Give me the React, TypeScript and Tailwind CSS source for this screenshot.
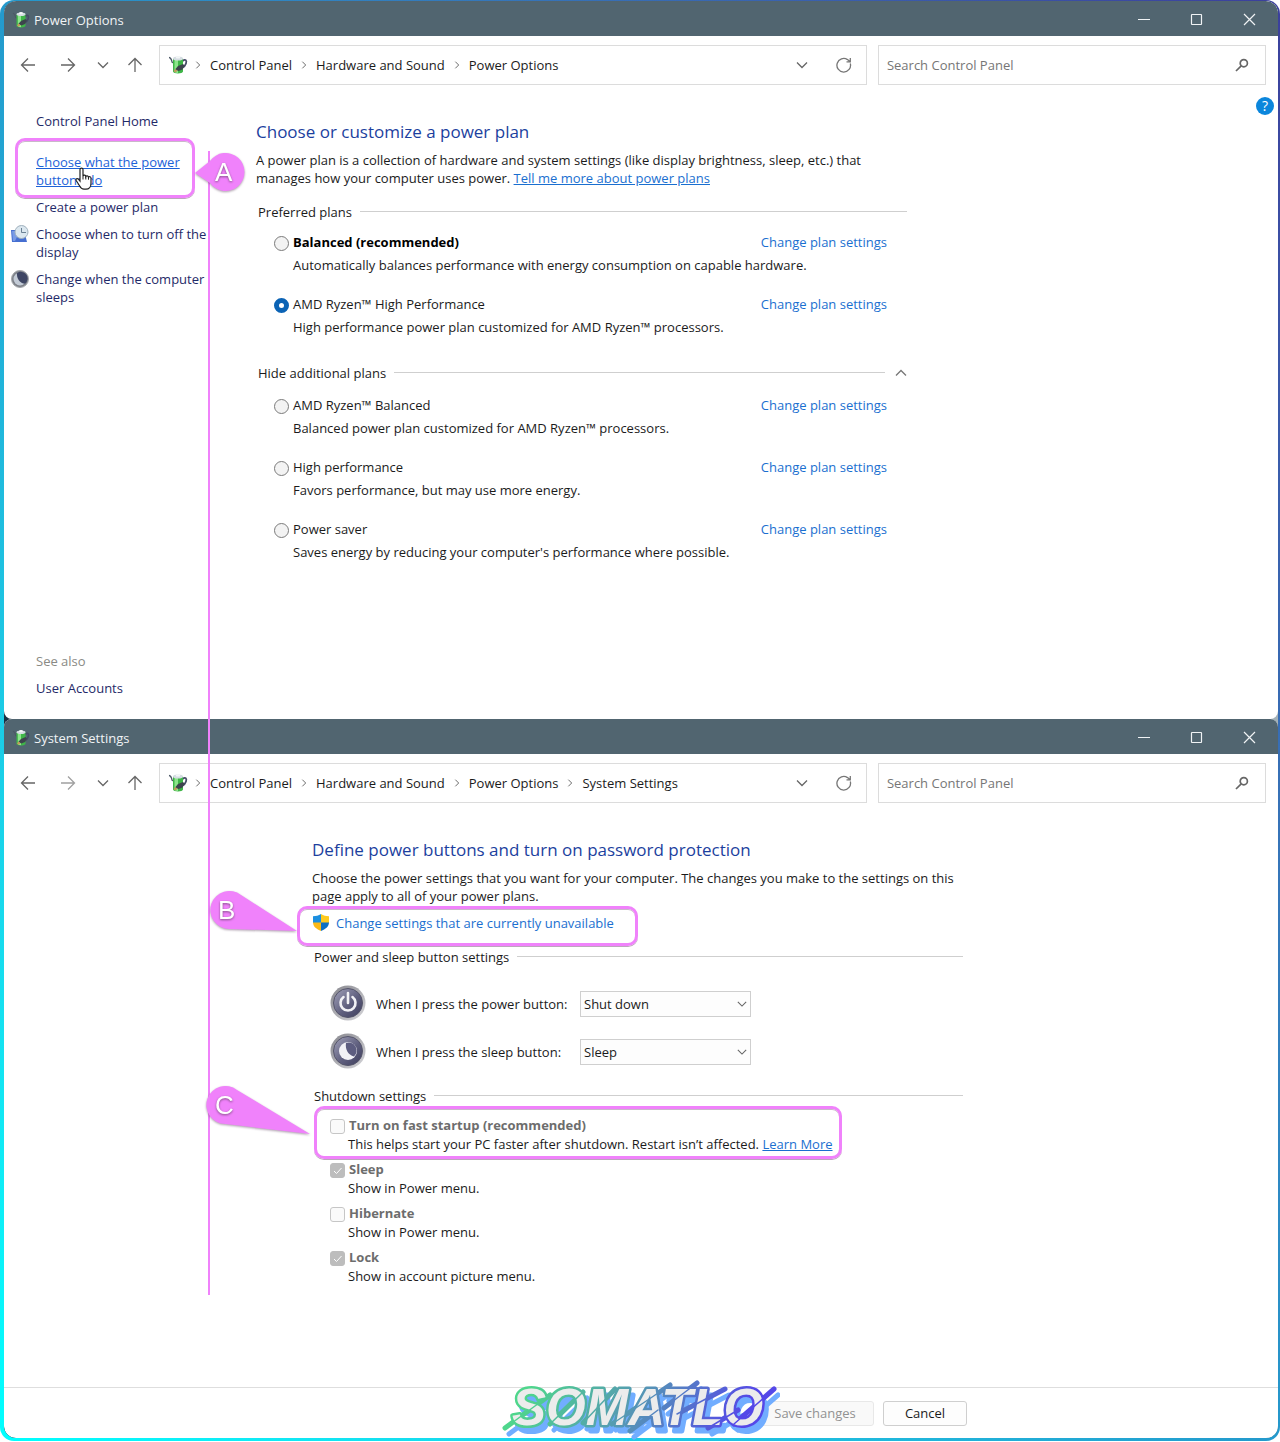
import type { ReactNode } from "react";

/** Shared colours of both windows. */
const LINK = "text-[#1a6fd0]";
const NAV_LINK = "text-[#1f2a68]";

interface Plan {
  id: string;
  name: string;
  text: string;
  bold?: boolean;
}

const PREFERRED: Plan[] = [
  {
    id: "balanced",
    name: "Balanced (recommended)",
    text: "Automatically balances performance with energy consumption on capable hardware.",
    bold: true,
  },
  {
    id: "amd-high",
    name: "AMD Ryzen™ High Performance",
    text: "High performance power plan customized for AMD Ryzen™ processors.",
  },
];

const ADDITIONAL: Plan[] = [
  { id: "amd-balanced", name: "AMD Ryzen™ Balanced", text: "Balanced power plan customized for AMD Ryzen™ processors." },
  { id: "high", name: "High performance", text: "Favors performance, but may use more energy." },
  { id: "saver", name: "Power saver", text: "Saves energy by reducing your computer's performance where possible." },
];

const SHUTDOWN = [
  { id: "fast", name: "Turn on fast startup (recommended)", text: "This helps start your PC faster after shutdown. Restart isn’t affected.", more: true, checked: false },
  { id: "sleep", name: "Sleep", text: "Show in Power menu.", more: false, checked: true },
  { id: "hibernate", name: "Hibernate", text: "Show in Power menu.", more: false, checked: false },
  { id: "lock", name: "Lock", text: "Show in account picture menu.", more: false, checked: true },
];

/** Green battery with a plug cable. */
function BatteryIcon({ className = "size-5" }: { className?: string }) {
  return (
    <svg viewBox="0 0 20 20" className={`shrink-0 ${className}`} aria-hidden="true">
      <path d="M1 2.500c2 .3 2.500 1.500 3 4.500l1.500 1" fill="none" stroke="#4d5866" strokeWidth="1.300" />
      <path d="M14.500 6c3-2.500 4.500-.5 3.500 2.500-.6 2-2 3.500-4 4.500" fill="none" stroke="#454a66" strokeWidth="1.800" />
      <path d="M5 3.500v13c0 2.600 10 2.600 10 0v-13z" fill="#3fb548" />
      <path d="M6.500 5v12c1 .8 2.300 1 3.500 1V5z" fill="#8be58a" />
      <ellipse cx="10" cy="3.600" rx="5" ry="2" fill="#d5dde2" />
      <ellipse cx="10" cy="2.400" rx="2.200" ry="1.200" fill="#f3f6f7" />
      <path d="M7 14.500l3-3.500 5-2 1.500 1.500-2 4-4 1.500z" fill="#3d444d" />
      <path d="M5.500 16l2-2 2 1.800-2 1.700z" fill="#c39a5a" />
    </svg>
  );
}

function Chevron({ className }: { className?: string }) {
  return (
    <svg width="12" height="12" viewBox="0 0 12 12" className={className} fill="none" stroke="currentColor" strokeWidth="1.300" aria-hidden="true">
      <path d="M1 3.500l5 5 5-5" />
    </svg>
  );
}

function Arrow({ className }: { className?: string }) {
  return (
    <svg width="16" height="16" viewBox="0 0 16 16" className={className} fill="none" stroke="currentColor" strokeWidth="1.300" aria-hidden="true">
      <path d="M15 8H1.500M8 1.500L1.500 8 8 14.500" />
    </svg>
  );
}

function TitleBar({ title }: { title: string }) {
  return (
    <header className="flex h-[35px] shrink-0 items-center bg-[#516570] pl-2 pr-[22px] pt-0.5 text-[#f0f3f5]">
      <BatteryIcon className="size-[18px]" />
      <h1 className="ml-1 text-[13px]">{title}</h1>
      <div className="ml-auto flex items-center gap-10">
        <button aria-label="Minimize">
          <svg width="13" height="13" viewBox="0 0 13 13" stroke="currentColor"><path d="M1 6.500h12" /></svg>
        </button>
        <button aria-label="Maximize">
          <svg width="13" height="13" viewBox="0 0 13 13" fill="none" stroke="currentColor" strokeWidth="1.200"><rect x="1.500" y="1.500" width="10" height="10" rx="0.500" /></svg>
        </button>
        <button aria-label="Close">
          <svg width="13" height="13" viewBox="0 0 13 13" stroke="currentColor" strokeWidth="1.200"><path d="M1 1l11 11M12 1L1 12" /></svg>
        </button>
      </div>
    </header>
  );
}

function NavBar({ path, forward }: { path: string[]; forward: boolean }) {
  return (
    <nav className="flex shrink-0 items-center pl-4 pr-3 pt-[9px] text-[#666]">
      <button aria-label="Back"><Arrow /></button>
      <button aria-label="Forward" className={forward ? "ml-6" : "ml-6 text-[#a0a0a0]"}><Arrow className="rotate-180" /></button>
      <button aria-label="Recent locations" className="ml-[21px]"><Chevron /></button>
      <button aria-label="Up" className="ml-[18px]"><Arrow className="rotate-90" /></button>
      <div className="ml-4 flex h-10 min-w-0 flex-[17] items-center border border-[#dcdcdc] pl-2 pr-3.5">
        <BatteryIcon />
        <ol className="ml-1.5 flex items-center text-[#1b1b1b]">
          {path.map((part) => (
            <li key={part} className="flex items-center">
              <Chevron className="size-2 shrink-0 -rotate-90 text-[#555]" />
              <a href="#" className="mx-2 whitespace-nowrap">{part}</a>
            </li>
          ))}
        </ol>
        <button aria-label="Previous locations" className="ml-auto"><Chevron /></button>
        <button aria-label="Refresh" className="ml-7">
          <svg width="16" height="16" viewBox="0 0 16 16" fill="none" stroke="#777" strokeWidth="1.300">
            <path d="M14.300 6.500A6.800 6.800 0 1 1 11.500 2.600L14 4.500M14.300 1v3.800h-3.800" />
          </svg>
        </button>
      </div>
      <div className="ml-[11px] flex h-10 min-w-0 flex-[9] items-center border border-[#dcdcdc] pl-2 pr-4">
        <input aria-label="Search Control Panel" placeholder="Search Control Panel" className="min-w-0 flex-1 bg-transparent outline-none placeholder:text-[#767676]" />
        <svg width="14" height="14" viewBox="0 0 14 14" fill="none" stroke="#666" strokeWidth="1.700" aria-hidden="true">
          <circle cx="8.800" cy="5.200" r="3.600" />
          <path d="M6.200 7.800L1 13" />
        </svg>
      </div>
    </nav>
  );
}

function SectionTitle({ children, action }: { children: ReactNode; action?: ReactNode }) {
  return (
    <div className="flex items-center pl-0.5">
      <h3 className="whitespace-nowrap">{children}</h3>
      <span className="-mt-0.5 ml-2 h-px flex-1 bg-[#cfcfcf]" />
      {action}
    </div>
  );
}

function PlanRow({ plan }: { plan: Plan }) {
  return (
    <li className="pl-[18px] pr-5">
      <div className="flex items-center">
        <input
          type="radio"
          name="plan"
          id={plan.id}
          defaultChecked={plan.id === "amd-high"}
          className="mt-0.5 size-[15px] appearance-none rounded-full border border-[#7b7b7b] bg-[#f3f3f3] checked:border-[5px] checked:border-[#0b63b5] checked:bg-white"
        />
        <label htmlFor={plan.id} className={plan.bold ? "ml-1 font-bold text-black" : "ml-1"}>{plan.name}</label>
        <a href="#" className={`ml-auto ${LINK}`}>Change plan settings</a>
      </div>
      <p className="mt-[5px] pl-[19px]">{plan.text}</p>
    </li>
  );
}

function Sidebar() {
  return (
    <aside className={`flex w-[204px] shrink-0 flex-col pb-[22px] pl-8 pt-[27px] ${NAV_LINK}`}>
      <a href="#">Control Panel Home</a>
      <ul className="mt-[23px] flex flex-col gap-[9px]">
        <li><a href="#" className="text-[#1d62d8] underline">Choose what the power<br />buttons do</a></li>
        <li><a href="#">Create a power plan</a></li>
        <li className="-ml-[25px] flex gap-[7px]">
          <svg width="18" height="18" viewBox="0 0 18 18" className="shrink-0" aria-hidden="true">
            <path d="M0 5h13l3 12H1z" fill="#466fd1" />
            <path d="M1 6h8l-5 10H2z" fill="#799be6" />
            <circle cx="10.500" cy="7" r="6.500" fill="#dbe7ef" stroke="#9fb0bd" />
            <path d="M10.500 3v4.500H15" fill="none" stroke="#6b8194" />
          </svg>
          <a href="#" className="whitespace-nowrap">Choose when to turn off the<br />display</a>
        </li>
        <li className="-ml-[25px] flex gap-[7px]">
          <svg width="18" height="18" viewBox="0 0 18 18" className="shrink-0" aria-hidden="true">
            <circle cx="9" cy="9" r="8.500" fill="#7d8188" stroke="#a5a9ad" />
            <circle cx="9" cy="9" r="6.500" fill="#c3cbd6" />
            <path d="M6 3.200a6.500 6.500 0 0 1 8 10.500C9.500 13.500 5.500 9 6 3.200z" fill="#3e4664" />
          </svg>
          <a href="#" className="whitespace-nowrap">Change when the computer<br />sleeps</a>
        </li>
      </ul>
      <div className="mt-auto flex flex-col gap-[9px]">
        <span className="text-[#8a8a85]">See also</span>
        <a href="#">User Accounts</a>
      </div>
    </aside>
  );
}

function PowerOptions() {
  return (
    <section className="flex min-h-[718px] flex-col overflow-hidden rounded-t-[12px] rounded-b-lg bg-white">
      <TitleBar title="Power Options" />
      <NavBar path={["Control Panel", "Hardware and Sound", "Power Options"]} forward />
      <div className="flex flex-1">
        <Sidebar />
        <main className="ml-12 mt-[35px] w-[651px]">
          <h2 className="text-[17px] leading-6 text-[#1c3f9e]">Choose or customize a power plan</h2>
          <p className="mt-[7px] whitespace-nowrap">
            A power plan is a collection of hardware and system settings (like display brightness, sleep, etc.) that<br />
            manages how your computer uses power. <a href="#" className={`underline ${LINK}`}>Tell me more about power plans</a>
          </p>
          <div className="mt-4"><SectionTitle>Preferred plans</SectionTitle></div>
          <ul className="mt-3 flex flex-col gap-[21px]">
            {PREFERRED.map((plan) => <PlanRow key={plan.id} plan={plan} />)}
          </ul>
          <div className="mt-7">
            <SectionTitle action={<button aria-label="Hide additional plans" className="ml-2.5 text-[#777]"><Chevron className="rotate-180" /></button>}>
              Hide additional plans
            </SectionTitle>
          </div>
          <ul className="mt-3.5 flex flex-col gap-[21px]">
            {ADDITIONAL.map((plan) => <PlanRow key={plan.id} plan={plan} />)}
          </ul>
        </main>
        <button aria-label="Help" className="ml-auto mr-1 mt-3 size-[18px] self-start rounded-full bg-[#0b86dc] text-[14px] text-white">?</button>
      </div>
    </section>
  );
}

/** Round metal button with a glyph in it. */
function RoundIcon({ children }: { children: ReactNode }) {
  return (
    <svg width="36" height="36" viewBox="0 0 36 36" className="shrink-0" aria-hidden="true">
      <defs>
        <linearGradient id="metal" x1="0" y1="0" x2="1" y2="1">
          <stop offset="0" stopColor="#85858c" />
          <stop offset="1" stopColor="#d6d6da" />
        </linearGradient>
        <linearGradient id="face" x1="0" y1="0" x2="1" y2="1">
          <stop offset="0" stopColor="#a2a2ba" />
          <stop offset="0.550" stopColor="#60607f" />
          <stop offset="1" stopColor="#3c3c5c" />
        </linearGradient>
      </defs>
      <circle cx="18" cy="18" r="17.500" fill="url(#metal)" />
      <circle cx="18" cy="18" r="14.500" fill="url(#face)" stroke="#55556a" />
      {children}
    </svg>
  );
}

function ButtonSetting({ id, label, value, icon }: { id: string; label: string; value: string; icon: ReactNode }) {
  return (
    <div className="flex items-center">
      <RoundIcon>{icon}</RoundIcon>
      <label htmlFor={id} className="ml-2.5 mt-0.5 w-[204px]">{label}</label>
      <div className="relative mt-0.5 w-[171px]">
        <select id={id} defaultValue={value} className="h-[26px] w-full appearance-none border border-[#cfcfcf] bg-[#fdfdfd] pl-[3px] text-[#1b1b1b]">
          <option>Shut down</option>
          <option>Sleep</option>
        </select>
        <Chevron className="pointer-events-none absolute right-1 top-2 size-2.5 text-[#666]" />
      </div>
    </div>
  );
}

function SystemSettings() {
  return (
    <section className="flex min-h-[719px] flex-col overflow-hidden rounded-t-lg rounded-b-[12px] bg-white">
      <TitleBar title="System Settings" />
      <NavBar path={["Control Panel", "Hardware and Sound", "Power Options", "System Settings"]} forward={false} />
      <main className="ml-[308px] mt-[35px] w-[651px]">
        <h2 className="text-[17px] leading-6 text-[#1c3f9e]">Define power buttons and turn on password protection</h2>
        <p className="mt-[7px] whitespace-nowrap">
          Choose the power settings that you want for your computer. The changes you make to the settings on this<br />
          page apply to all of your power plans.
        </p>
        <a href="#" className={`mt-[9px] flex items-center gap-1.5 ${LINK}`}>
          <svg width="18" height="18" viewBox="0 0 18 18" aria-hidden="true">
            <path d="M9 0C6.500 1.500 4 2.200 1 2.200V9h8z" fill="#1c8fe0" />
            <path d="M9 0c2.500 1.500 5 2.200 8 2.200V9H9z" fill="#ffcb1f" />
            <path d="M1 8.500c.3 4.500 3.500 6.500 8 8.500V8.500z" fill="#fbb917" />
            <path d="M17 8.500c-.3 4.500-3.500 6.500-8 8.500V8.500z" fill="#0c6fc4" />
          </svg>
          Change settings that are currently unavailable
        </a>
        <div className="mt-4"><SectionTitle>Power and sleep button settings</SectionTitle></div>
        <div className="mt-[19px] flex flex-col gap-3 pl-[18px]">
          <ButtonSetting
            id="power-button"
            label="When I press the power button:"
            value="Shut down"
            icon={<path d="M13.500 12a7.500 7.500 0 1 0 9 0M18 8v10" fill="none" stroke="#f2f2f6" strokeWidth="2.600" strokeLinecap="round" />}
          />
          <ButtonSetting
            id="sleep-button"
            label="When I press the sleep button:"
            value="Sleep"
            icon={
              <>
                <circle cx="18" cy="18" r="9" fill="#f2f2f6" />
                <path d="M16 10a8 8 0 0 1 8 13.500C18 22 15 16 16 10z" fill="#5d5d80" />
              </>
            }
          />
        </div>
        <div className="mt-[18px]"><SectionTitle>Shutdown settings</SectionTitle></div>
        <ul className="mt-[11px] flex flex-col gap-1.5 pl-[18px]">
          {SHUTDOWN.map(({ id, name, text, more, checked }) => (
            <li key={id}>
              <div className="flex items-center">
                <span className="relative mt-0.5 size-[15px]">
                  <input
                    type="checkbox"
                    id={id}
                    disabled
                    defaultChecked={checked}
                    className="block size-[15px] appearance-none rounded-[3px] border border-[#c6c6c6] bg-[#fafafa] checked:border-[#bdbdbd] checked:bg-[#bdbdbd]"
                  />
                  {checked && (
                    <svg viewBox="0 0 15 15" className="absolute inset-0" fill="none" stroke="#fff" aria-hidden="true"><path d="M4 8l2.500 2.500L11.500 5" /></svg>
                  )}
                </span>
                <label htmlFor={id} className="ml-1 font-bold text-[#6d6d6d]">{name}</label>
              </div>
              <p className="whitespace-nowrap pl-[18px] leading-5">
                {text}
                {more && <> <a href="#" className={`underline ${LINK}`}>Learn More</a></>}
              </p>
            </li>
          ))}
        </ul>
      </main>
      <footer className="mt-auto flex h-[51px] items-center gap-[9px] border-t border-[#dedede] pl-[752px]">
        <button disabled className="h-[25px] w-[118px] shrink-0 rounded-[3px] border border-[#e8e8e8] bg-[#f9f9f9] text-[#929292]">Save changes</button>
        <button className="h-[25px] w-[84px] shrink-0 rounded-[3px] border border-[#cfcfcf] bg-[#fdfdfd] text-[#1b1b1b]">Cancel</button>
      </footer>
    </section>
  );
}

/** Pin with a letter whose tip points at a highlighted area. */
function Callout({ letter, shape, className, letterClass }: { letter: string; shape: string; className: string; letterClass: string }) {
  return (
    <div className={`absolute ${className}`}>
      <svg width="100%" height="100%" className="overflow-visible drop-shadow-[0_1px_1px_rgba(90,60,90,0.5)]" aria-hidden="true">
        <path d={shape} fill="#f082fb" />
      </svg>
      <span className={`absolute top-0 font-['Liberation_Sans',sans-serif] text-[26px] leading-10 text-white drop-shadow-[0_1px_1px_rgba(90,60,90,0.7)] ${letterClass}`}>{letter}</span>
    </div>
  );
}

const FRAME = "absolute rounded-[10px] border-[3px] border-[#f082fb] shadow-[0_1px_0_rgba(120,80,120,0.5),inset_0_1px_0_rgba(120,80,120,0.4)]";

function Annotations() {
  return (
    <div className="pointer-events-none absolute inset-0">
      <div className="absolute left-52 top-[151px] h-[1144px] w-0.5 bg-[#f082fb]" />
      <div className={`${FRAME} left-[15px] top-[138px] h-[60px] w-[180px]`} />
      <div className={`${FRAME} left-[297px] top-[906px] h-10 w-[341px]`} />
      <div className={`${FRAME} left-[314px] top-[1106px] h-[53px] w-[528px]`} />
      <Callout letter="A" className="left-[195px] top-[152px] h-10 w-[50px]" letterClass="left-5" shape="M0 21L15 9A19 19 0 1 1 15 31z" />
      <Callout letter="B" className="left-[209px] top-[890px] h-10 w-[88px]" letterClass="left-[9px]" shape="M88 41L20 39A19 19 0 1 1 32 5z" />
      <Callout letter="C" className="left-[205px] top-[1085px] h-10 w-[105px]" letterClass="left-[10px]" shape="M105 49L20 39A19 19 0 1 1 32 5z" />
      <svg width="18" height="24" viewBox="0 0 18 24" className="absolute left-[75px] top-[167px]" aria-hidden="true">
        <path
          d="M5 2.500C5 .6 8 .6 8 2.500V9c.5-1.300 2.700-1 2.800.5.6-1.200 2.600-.8 2.700.7.8-1 2.500-.5 2.500 1v5c0 3.500-2 6-5 6H9c-2.500 0-3.500-1.500-4.500-3.500L1.200 13.500c-.8-1.500 1-2.600 2.200-1.400L5 14z"
          fill="#fff"
          stroke="#222"
          strokeWidth="1.200"
        />
        <path d="M8 9v3.500M10.800 9.500v3M13.500 10.200v2.500" stroke="#222" />
      </svg>
    </div>
  );
}

function Watermark() {
  const slashes = "M25 58L70 25M70 54L103 22M103 53L135 19M132 54L190 15M150 61L178 40M184 38L217 13M197 44L245 19M228 58L258 40M254 54L294 19";
  return (
    <svg width="300" height="72" viewBox="0 0 300 72" className="pointer-events-none absolute left-[480px] top-[1370px]" aria-label="SOMATLO">
      <defs>
        <linearGradient id="brand" gradientUnits="userSpaceOnUse" x1="60" y1="0" x2="230" y2="100">
          <stop offset="0" stopColor="#4fd68c" />
          <stop offset="0.500" stopColor="#5597b4" />
          <stop offset="1" stopColor="#5548e8" />
        </linearGradient>
      </defs>
      <g
        className="drop-shadow-[4px_6px_0_#71adff]"
        fontFamily="Liberation Sans, sans-serif"
        fontSize="51"
        fontWeight="700"
        fontStyle="italic"
        strokeLinejoin="round"
        strokeLinecap="round"
      >
        <path d={slashes} stroke="url(#brand)" strokeWidth="5" />
        <text x="32" y="55" fill="#ececec" stroke="url(#brand)" strokeWidth="5" paintOrder="stroke">SOMATLO</text>
        <path d={slashes} stroke="url(#brand)" strokeWidth="1.500" />
      </g>
    </svg>
  );
}

export default function App() {
  return (
    <div className="relative min-h-screen w-full bg-white font-['Open_Sans','Noto_Sans',sans-serif] text-[13px] leading-[18px] text-[#1b1b1b]">
      <div className="overflow-hidden rounded-[14px] bg-linear-to-tr from-[#00ffff] via-[#2499cc] to-[#3b3f9c] pb-[3px] pl-1 pr-0.5 pt-px">
        <div className="overflow-hidden rounded-[12px] bg-linear-to-r from-[#1a2f42] to-[#a3b1b8]">
          <PowerOptions />
          <SystemSettings />
        </div>
      </div>
      <Annotations />
      <Watermark />
    </div>
  );
}
